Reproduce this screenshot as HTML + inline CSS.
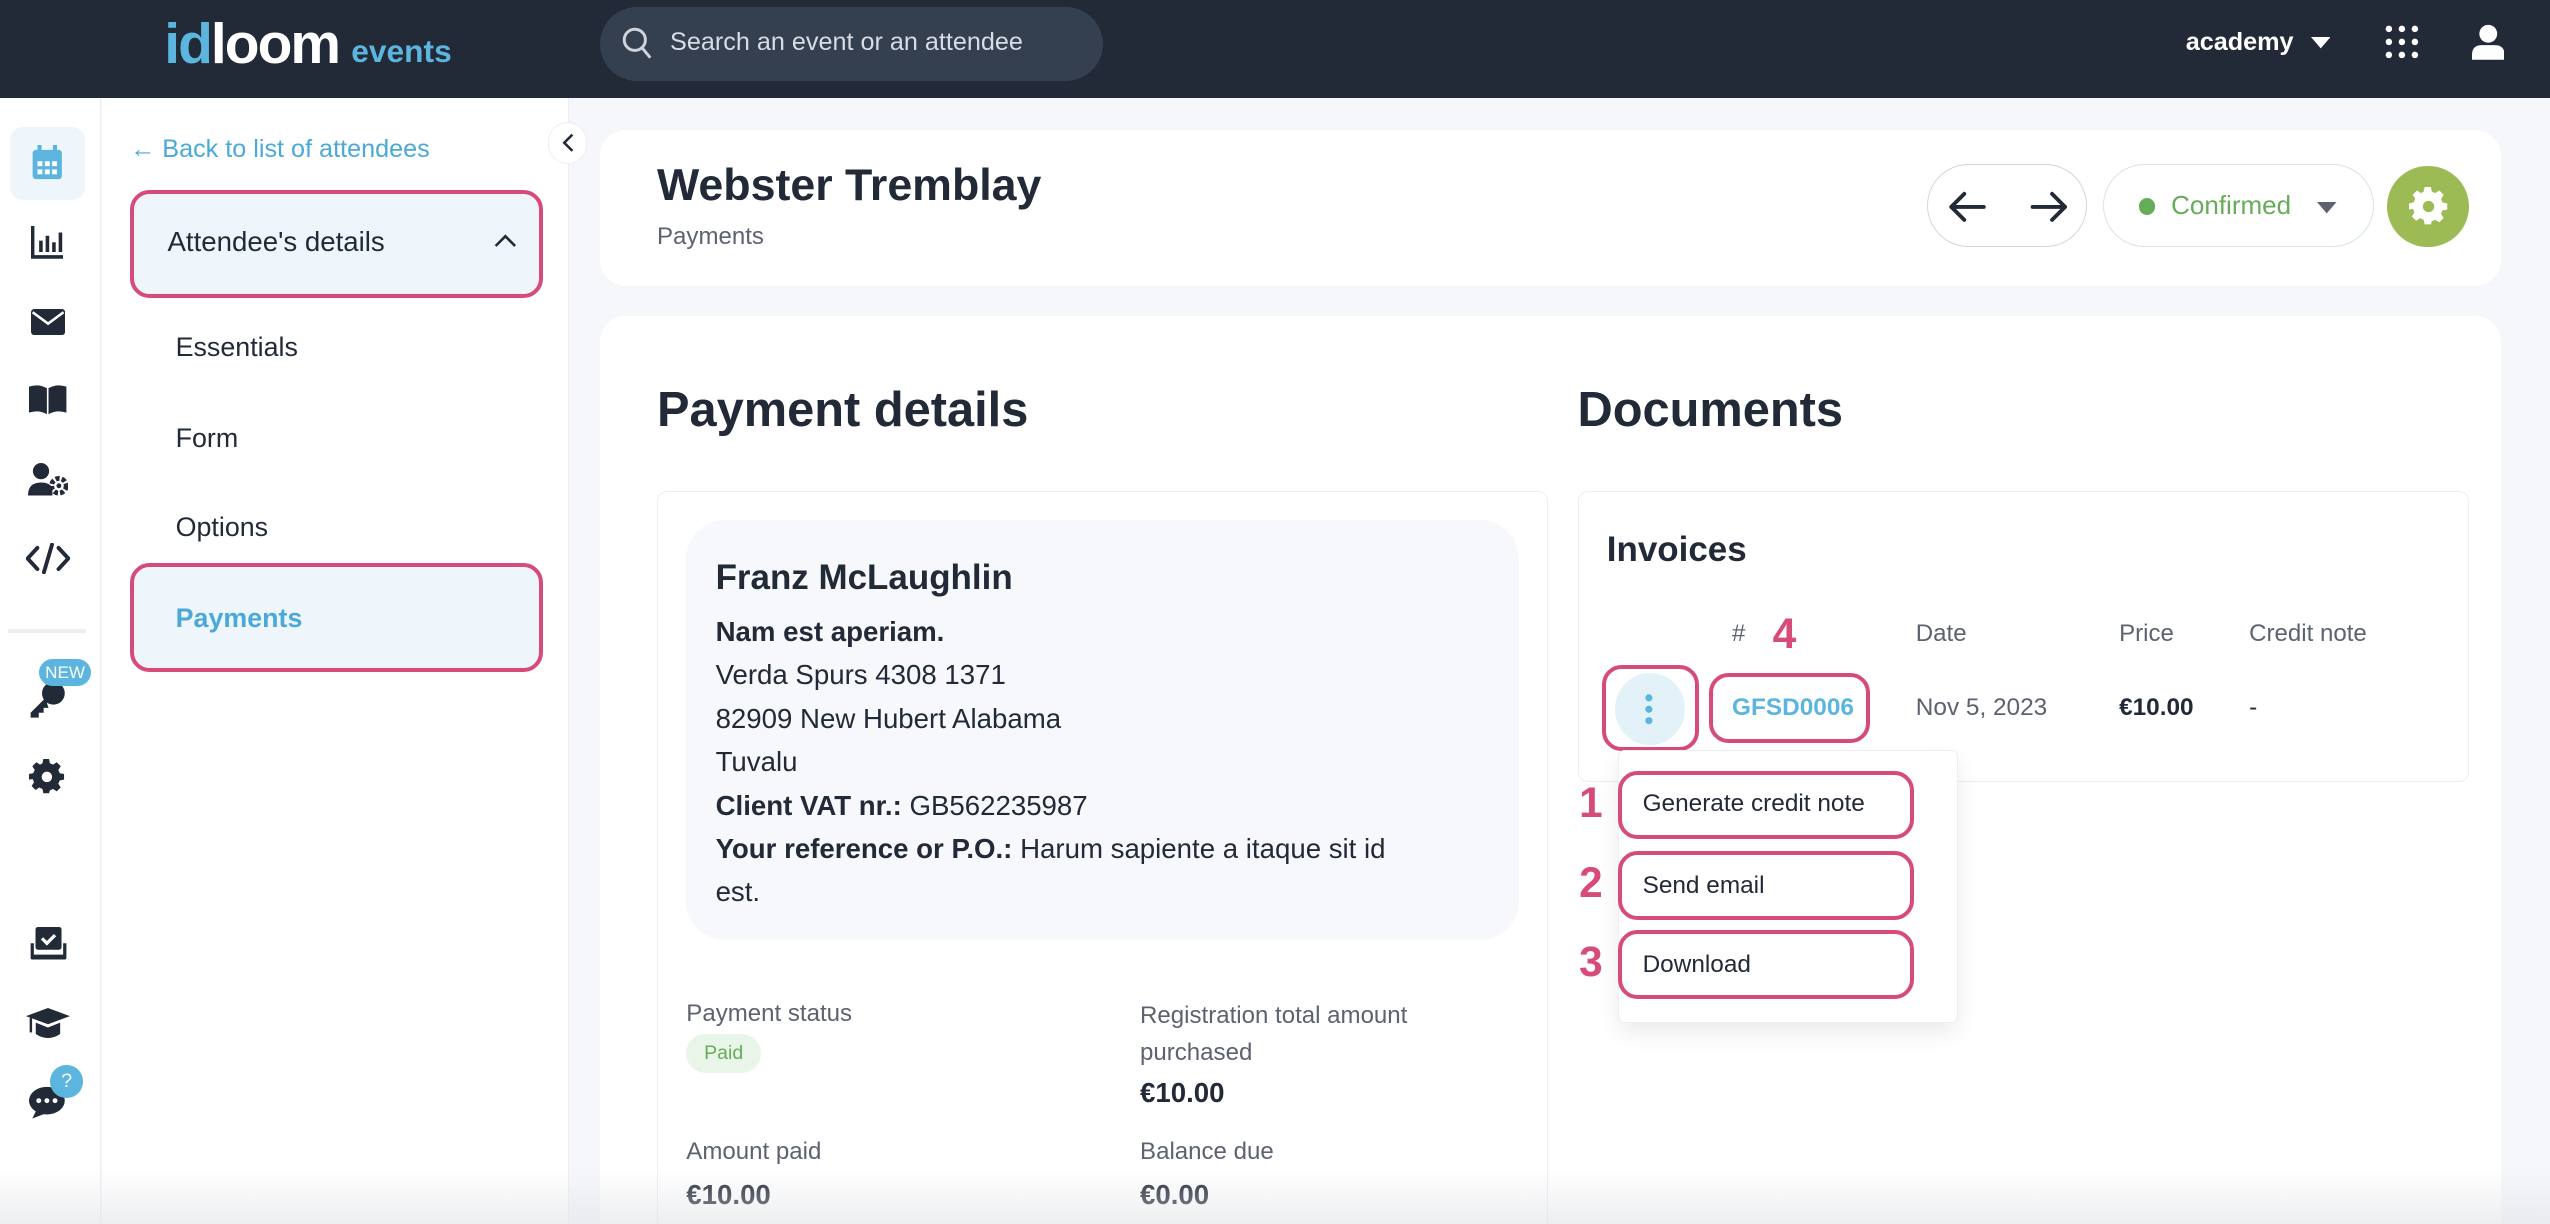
<!DOCTYPE html>
<html><head><meta charset="utf-8"><style>
*{box-sizing:border-box;margin:0;padding:0}
html,body{width:2550px;height:1224px;overflow:hidden;background:#f6f7fa}
#root{zoom:1.6263;width:1568px;height:753px;position:relative;font-family:"Liberation Sans",sans-serif;color:#222a38;background:#f6f7fa;overflow:hidden}
.a{position:absolute}
.top{left:0;top:0;width:1568px;height:60px;background:#222a38}
.rail{left:0;top:60px;width:62px;height:693px;background:#fff;border-right:1px solid #eceef2}
.side{left:63px;top:60px;width:287px;height:693px;background:#fff;border-right:1px solid #eceef2}
.pink{border:3px solid #d64b7a;border-radius:12px}
.card{background:#fff;border-radius:16px}
.ic{fill:#222a38}
.lbl{font-size:14.8px;color:#5c6270}
.val{font-size:17px;font-weight:bold}
.t{font-size:16.5px;white-space:nowrap}
</style></head><body><div id="root">
<div class="a top"></div>
<div class="a" style="left:101px;top:7px;font-size:35px;font-weight:bold;color:#fff;letter-spacing:-1.2px"><span style="color:#5bb5de">id</span>loom</div>
<div class="a" style="left:216px;top:20px;font-size:19.5px;font-weight:bold;color:#5bb5de">events</div>
<div class="a" style="left:369px;top:4px;width:309px;height:46px;background:#343f50;border-radius:23px"></div>
<svg class="a" style="left:382px;top:16px" width="20" height="22" viewBox="0 0 20 22"><circle cx="8.5" cy="8.5" r="6.5" fill="none" stroke="#cfd4dc" stroke-width="1.8"/><path d="M13 13.5l5 6" stroke="#cfd4dc" stroke-width="1.8"/></svg>
<div class="a" style="left:412px;top:17px;font-size:15.5px;color:#d8dce3">Search an event or an attendee</div>
<div class="a" style="left:1344px;top:17px;font-size:15.5px;font-weight:bold;color:#fff">academy</div>
<svg class="a" style="left:1421px;top:23px" width="12" height="8"><path d="M0 0h12L6 7z" fill="#fff"/></svg>
<svg class="a" style="left:1466px;top:15px" width="24" height="24"><g fill="#fff"><circle cx="3" cy="3" r="2"/><circle cx="11" cy="3" r="2"/><circle cx="19" cy="3" r="2"/><circle cx="3" cy="11" r="2"/><circle cx="11" cy="11" r="2"/><circle cx="19" cy="11" r="2"/><circle cx="3" cy="19" r="2"/><circle cx="11" cy="19" r="2"/><circle cx="19" cy="19" r="2"/></g></svg>
<svg class="a" style="left:1520px;top:15px" width="20" height="22"><circle cx="10" cy="6" r="5.5" fill="#fff"/><path d="M0 22v-3q0-6 6-6h8q6 0 6 6v3z" fill="#fff"/></svg>

<div class="a rail"></div>
<div class="a" style="left:6px;top:78px;width:46px;height:45px;background:#eef6fb;border-radius:8px"></div>
<svg class="a" style="left:19px;top:89px" width="20" height="22"><rect x="1" y="3" width="18" height="18" rx="2" fill="#5bb5de"/><rect x="4" y="0" width="2.5" height="5" fill="#5bb5de"/><rect x="13.5" y="0" width="2.5" height="5" fill="#5bb5de"/><g fill="#fff"><rect x="4" y="10" width="3" height="3"/><rect x="8.5" y="10" width="3" height="3"/><rect x="13" y="10" width="3" height="3"/><rect x="4" y="15" width="3" height="3"/><rect x="8.5" y="15" width="3" height="3"/><rect x="13" y="15" width="3" height="3"/></g></svg>
<svg class="a" style="left:19px;top:139px" width="20" height="20"><path d="M1 0v19h19" fill="none" stroke="#222a38" stroke-width="2.2"/><g class="ic"><rect x="5" y="9" width="2.2" height="7"/><rect x="9" y="6" width="2.2" height="10"/><rect x="13" y="10" width="2.2" height="6"/><rect x="17" y="4" width="2.2" height="12"/></g></svg>
<svg class="a" style="left:19px;top:190px" width="21" height="16"><rect width="21" height="16" rx="2" class="ic"/><path d="M1 2l9.5 7L20 2" fill="none" stroke="#fff" stroke-width="1.6"/></svg>
<svg class="a" style="left:18px;top:237px" width="23" height="18"><path d="M0 1q6-2 11 1v16q-5-3-11-1zM23 1q-6-2-11 1v16q5-3 11-1z" class="ic"/></svg>
<svg class="a" style="left:17px;top:285px" width="25" height="20"><circle cx="8" cy="5" r="5" class="ic"/><path d="M0 20q0-8 8-8q5 0 7 3v5z" class="ic"/><circle cx="19" cy="14" r="4.5" fill="none" stroke="#222a38" stroke-width="3" stroke-dasharray="2.5 1.3"/><circle cx="19" cy="14" r="1.5" class="ic"/></svg>
<svg class="a" style="left:16px;top:334px" width="27" height="19"><path d="M7 3L1 9.5 7 16M20 3l6 6.5L20 16M16 1l-5 17" fill="none" stroke="#222a38" stroke-width="2.4" stroke-linecap="round"/></svg>
<div class="a" style="left:5px;top:387px;width:48px;height:2px;background:#eceef2"></div>
<svg class="a" style="left:18px;top:416px" width="24" height="26"><circle cx="15" cy="10" r="7" class="ic"/><path d="M10 13l-9 9v3h5v-3h3v-3h3z" class="ic"/></svg>
<div class="a" style="left:24px;top:405px;width:32px;height:17px;background:#5bb5de;border-radius:9px;color:#fff;font-size:10.5px;text-align:center;line-height:17px">NEW</div>
<svg class="a" style="left:18px;top:467px" width="22" height="22" viewBox="0 0 24 24"><path class="ic" d="M10 1h4l.6 3 2.2 1 2.6-1.7 2.8 2.8L20.5 8.7l1 2.3 3 .5v4l-3 .5-1 2.3 1.7 2.6-2.8 2.8-2.6-1.7-2.2 1L14 25h-4l-.6-3-2.3-1-2.5 1.7-2.8-2.8 1.7-2.6-1-2.3L0 15.5v-4l3-.6 1-2.3L2.3 6.1l2.8-2.8 2.6 1.7L9.4 4z" transform="translate(0 -1) scale(.96)"/><circle cx="12" cy="12" r="3.5" fill="#fff"/></svg>
<svg class="a" style="left:18px;top:570px" width="24" height="21"><rect x="4" y="0" width="16" height="14" rx="1.5" class="ic"/><path d="M8 7l3 3 5-5" fill="none" stroke="#fff" stroke-width="2"/><path d="M1 10v9q0 1 1 1h20q1 0 1-1v-9h-2v7H3v-7z" class="ic"/></svg>
<svg class="a" style="left:16px;top:620px" width="27" height="20"><path d="M13.5 0L27 5 13.5 10 0 5z" class="ic"/><path d="M6 9v7q7.5 5 15 0V9l-7.5 3z" class="ic"/><path d="M3 6v9" stroke="#222a38" stroke-width="1.5"/></svg>
<svg class="a" style="left:18px;top:668px" width="22" height="20"><ellipse cx="11" cy="9" rx="11" ry="8.5" class="ic"/><path d="M2 20l3-6 5 3z" class="ic"/><g fill="#fff"><circle cx="6" cy="9" r="1.5"/><circle cx="11" cy="9" r="1.5"/><circle cx="16" cy="9" r="1.5"/></g></svg>
<div class="a" style="left:31px;top:655px;width:20px;height:20px;background:#5bb5de;border-radius:50%;color:#fff;font-size:12px;text-align:center;line-height:20px">?</div>

<div class="a side"></div>
<div class="a" style="left:80px;top:83px;font-size:15.5px;color:#4ba9d8">&#8592; Back to list of attendees</div>
<div class="a pink" style="left:80px;top:117px;width:254px;height:66px;background:#eef6fb"></div>
<div class="a" style="left:103px;top:139px;font-size:17px">Attendee's details</div>
<svg class="a" style="left:304px;top:143px" width="14" height="9"><path d="M1 8l6-6 6 6" fill="none" stroke="#222a38" stroke-width="1.6"/></svg>
<div class="a t" style="left:108px;top:204px">Essentials</div>
<div class="a t" style="left:108px;top:260px">Form</div>
<div class="a t" style="left:108px;top:315px">Options</div>
<div class="a pink" style="left:80px;top:346px;width:254px;height:67px;background:#eef6fb"></div>
<div class="a t" style="left:108px;top:371px;color:#4ba9d8;font-weight:bold">Payments</div>
<div class="a" style="left:337px;top:75px;width:24px;height:26px;background:#fff;border:1px solid #eceef2;border-radius:12px"></div>
<svg class="a" style="left:345px;top:82px" width="8" height="12"><path d="M7 1L2 6l5 5" fill="none" stroke="#222a38" stroke-width="1.6"/></svg>

<div class="a card" style="left:369px;top:80px;width:1169px;height:96px"></div>
<div class="a" style="left:404px;top:99px;font-size:27.5px;font-weight:bold">Webster Tremblay</div>
<div class="a" style="left:404px;top:137px;font-size:14.8px;color:#5c6270">Payments</div>
<div class="a" style="left:1185px;top:101px;width:98px;height:51px;border:1px solid #d2d6de;border-radius:26px"></div>
<svg class="a" style="left:1198px;top:116px" width="74" height="22"><path d="M22 11H2M10 3l-8 8 8 8M52 11h20M64 3l8 8-8 8" fill="none" stroke="#222a38" stroke-width="2.4" stroke-linecap="round" stroke-linejoin="round"/></svg>
<div class="a" style="left:1293px;top:101px;width:167px;height:51px;border:1px solid #d6e9d4;border-radius:26px"></div>
<div class="a" style="left:1315px;top:122px;width:10px;height:10px;border-radius:50%;background:#66ad58"></div>
<div class="a" style="left:1335px;top:117px;font-size:16px;color:#66ad58">Confirmed</div>
<svg class="a" style="left:1425px;top:124px" width="12" height="8"><path d="M0 0h12L6 7z" fill="#5c6270"/></svg>
<div class="a" style="left:1468px;top:102px;width:50px;height:50px;border-radius:50%;background:#9dbb55"></div>
<svg class="a" style="left:1481px;top:115px" width="24" height="24" viewBox="0 0 24 24"><path fill="#fff" d="M10 1h4l.6 3 2.2 1 2.6-1.7 2.8 2.8L20.5 8.7l1 2.3 3 .5v4l-3 .5-1 2.3 1.7 2.6-2.8 2.8-2.6-1.7-2.2 1L14 25h-4l-.6-3-2.3-1-2.5 1.7-2.8-2.8 1.7-2.6-1-2.3L0 15.5v-4l3-.6 1-2.3L2.3 6.1l2.8-2.8 2.6 1.7L9.4 4z" transform="translate(0 -1) scale(.96)"/><circle cx="12" cy="12" r="3.5" fill="#9dbb55"/></svg>

<div class="a card" style="left:369px;top:194px;width:1169px;height:559px;border-radius:16px 16px 0 0"></div>
<div class="a" style="left:404px;top:235px;font-size:30px;font-weight:bold">Payment details</div>
<div class="a" style="left:970px;top:235px;font-size:30px;font-weight:bold">Documents</div>
<div class="a" style="left:404px;top:302px;width:548px;height:451px;border:1px solid #eceef2;border-bottom:none;border-radius:6px 6px 0 0"></div>
<div class="a" style="left:422px;top:320px;width:512px;height:258px;background:#f6f8fb;border-radius:24px"></div>
<div class="a" style="left:440px;top:343px;font-size:21.5px;font-weight:bold">Franz McLaughlin</div>
<div class="a" style="left:440px;top:375px;font-size:17px;line-height:26.7px;width:455px">
<b>Nam est aperiam.</b><br>Verda Spurs 4308 1371<br>82909 New Hubert Alabama<br>Tuvalu<br><b>Client VAT nr.:</b> GB562235987<br><b>Your reference or P.O.:</b> Harum sapiente a itaque sit id<br>est.</div>
<div class="a lbl" style="left:422px;top:615px">Payment status</div>
<div class="a" style="left:422px;top:636px;width:46px;height:24px;background:#eaf5ea;border-radius:12px;color:#66ad58;font-size:12px;text-align:center;line-height:24px">Paid</div>
<div class="a lbl" style="left:701px;top:613px;line-height:23px;width:200px">Registration total amount purchased</div>
<div class="a val" style="left:701px;top:662px">€10.00</div>
<div class="a lbl" style="left:422px;top:700px">Amount paid</div>
<div class="a val" style="left:422px;top:725px">€10.00</div>
<div class="a lbl" style="left:701px;top:700px">Balance due</div>
<div class="a val" style="left:701px;top:725px">€0.00</div>

<div class="a" style="left:970px;top:302px;width:548px;height:179px;border:1px solid #eceef2;border-radius:6px"></div>
<div class="a" style="left:988px;top:326px;font-size:21.5px;font-weight:bold">Invoices</div>
<div class="a lbl" style="left:1065px;top:381px">#</div>
<div class="a lbl" style="left:1178px;top:381px">Date</div>
<div class="a lbl" style="left:1303px;top:381px">Price</div>
<div class="a lbl" style="left:1383px;top:381px">Credit note</div>
<div class="a" style="left:1090px;top:375px;font-size:26px;font-weight:bold;color:#d64b7a">4</div>
<div class="a pink" style="left:985px;top:409px;width:60px;height:53px"></div>
<div class="a" style="left:993px;top:414px;width:43px;height:44px;border-radius:50%;background:#e3f1f9"></div>
<svg class="a" style="left:1011px;top:426px" width="6" height="20"><g fill="#5bb5de"><circle cx="3" cy="3" r="2.2"/><circle cx="3" cy="10" r="2.2"/><circle cx="3" cy="17" r="2.2"/></g></svg>
<div class="a pink" style="left:1051px;top:414px;width:99px;height:43px"></div>
<div class="a" style="left:1065px;top:427px;font-size:15px;font-weight:bold;color:#5bb5de">GFSD0006</div>
<div class="a" style="left:1178px;top:427px;font-size:15px;color:#5c6270">Nov 5, 2023</div>
<div class="a" style="left:1303px;top:427px;font-size:15px;font-weight:bold">€10.00</div>
<div class="a" style="left:1383px;top:427px;font-size:15px">-</div>

<div class="a" style="left:995px;top:461px;width:209px;height:168px;background:#fff;border:1px solid #eceef2;border-radius:4px;box-shadow:0 6px 14px rgba(0,0,0,.08)"></div>
<div class="a pink" style="left:995px;top:474px;width:182px;height:42px"></div>
<div class="a pink" style="left:995px;top:523px;width:182px;height:43px"></div>
<div class="a pink" style="left:995px;top:572px;width:182px;height:42px"></div>
<div class="a" style="left:1010px;top:486px;font-size:15px">Generate credit note</div>
<div class="a" style="left:1010px;top:536px;font-size:15px">Send email</div>
<div class="a" style="left:1010px;top:585px;font-size:15px">Download</div>
<div class="a" style="left:971px;top:479px;font-size:26px;font-weight:bold;color:#d64b7a">1</div>
<div class="a" style="left:971px;top:528px;font-size:26px;font-weight:bold;color:#d64b7a">2</div>
<div class="a" style="left:971px;top:577px;font-size:26px;font-weight:bold;color:#d64b7a">3</div>
<div class="a" style="left:0;top:718px;width:1568px;height:35px;background:linear-gradient(rgba(230,232,236,0),rgba(225,227,231,.6))"></div>
</div></body></html>
